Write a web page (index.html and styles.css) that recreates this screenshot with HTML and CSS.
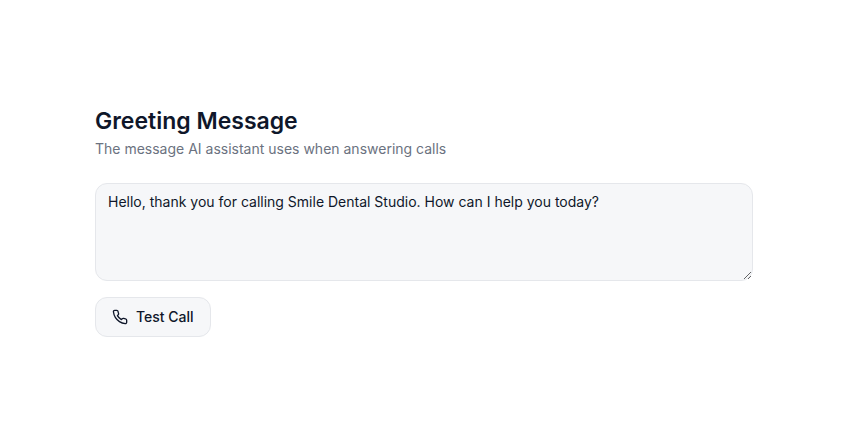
FILE: index.html
```html
<!DOCTYPE html>
<html lang="en">
<head>
    <meta charset="UTF-8">
    <meta name="viewport" content="width=device-width, initial-scale=1.0">
    <title>Greeting Message</title>
    <link rel="stylesheet" href="styles.css">
</head>
<body>
    <main class="greeting">
        <div class="greeting-header">
            <h2 id="greetingTitle">Greeting Message</h2>
            <p id="greetingHint">The message AI assistant uses when answering calls</p>
        </div>

        <textarea class="greeting-text" aria-labelledby="greetingTitle" aria-describedby="greetingHint" spellcheck="false">Hello, thank you for calling Smile Dental Studio. How can I help you today?</textarea>

        <button type="button" class="test-call">
            <svg viewBox="0 0 24 24" aria-hidden="true">
                <path d="M22 16.92v3a2 2 0 0 1-2.18 2 19.79 19.79 0 0 1-8.63-3.07 19.5 19.5 0 0 1-6-6 19.79 19.79 0 0 1-3.07-8.67A2 2 0 0 1 4.11 2h3a2 2 0 0 1 2 1.72 12.84 12.84 0 0 0 .7 2.81 2 2 0 0 1-.45 2.11L8.09 9.91a16 16 0 0 0 6 6l1.27-1.27a2 2 0 0 1 2.11-.45 12.84 12.84 0 0 0 2.81.7A2 2 0 0 1 22 16.92z"/>
            </svg>
            Test Call
        </button>
    </main>
</body>
</html>
```
FILE: styles.css
```css
* {
    box-sizing: border-box;
}
body {
    font-family: 'Inter', sans-serif;
    font-size: 14px;
    line-height: 20px;
    background-color: #ffffff;
    color: #0f172a;
    margin: 0;
}
.greeting {
    display: flex;
    flex-direction: column;
    align-items: flex-start;
    gap: 16px;
    padding: 105px 104px 104px 95px;
}
.greeting-header {
    margin-bottom: 8px;
}
h2 {
    margin: 0;
    font-size: 23px;
    line-height: 32px;
    font-weight: 600;
}
p {
    margin: 2px 0 0;
    color: #6b7280;
}
.greeting-text {
    display: block;
    width: 100%;
    height: 98px;
    padding: 8px 12px;
    border: 1px solid #e5e7eb;
    border-radius: 12px;
    background-color: #f6f7f9;
    color: inherit;
    font: inherit;
    resize: vertical;
}
.test-call {
    display: flex;
    align-items: center;
    gap: 8px;
    height: 40px;
    padding: 0 16px;
    border: 1px solid #e5e7eb;
    border-radius: 12px;
    background-color: #f6f7f9;
    color: inherit;
    font: inherit;
    font-weight: 500;
    cursor: pointer;
}
.test-call svg {
    width: 16px;
    height: 16px;
    fill: none;
    stroke: currentColor;
    stroke-width: 2;
    stroke-linecap: round;
    stroke-linejoin: round;
}
```
